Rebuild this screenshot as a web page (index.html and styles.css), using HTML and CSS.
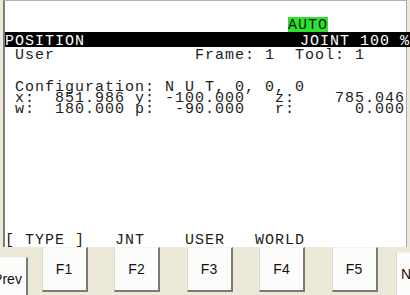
FILE: index.html
```html
<!DOCTYPE html>
<html lang="en">
<head>
    <meta charset="UTF-8">
    <title>Position</title>
    <link rel="stylesheet" href="styles.css">
</head>
<body>

<div id="pendant">
    <div id="screen">
        <div class="status"><span class="mode">AUTO</span></div>
        <div class="titlebar">
            <span>POSITION</span>
            <span>JOINT 100 %</span>
        </div>
        <pre class="line user"> User              Frame: 1  Tool: 1</pre>
        <pre class="line config"> Configuration: N U T, 0, 0, 0</pre>
        <pre class="line"> x:  851.986 y: -100.000   z:    785.046</pre>
        <pre class="line"> w:  180.000 p:  -90.000   r:      0.000</pre>
        <pre class="line labels">[ TYPE ]   JNT    USER   WORLD</pre>
    </div>

    <div id="keys">
        <button class="key prev">Prev</button>
        <button class="key">F1</button>
        <button class="key">F2</button>
        <button class="key">F3</button>
        <button class="key">F4</button>
        <button class="key">F5</button>
        <button class="key next">Next</button>
    </div>
</div>

</body>
</html>
```

FILE: styles.css
```css
body {
    margin: 0;
    background-color: #ece9d8; /* panel beige */
    overflow: hidden;
}

#pendant {
    width: 410px;
    height: 295px;
    overflow: hidden;
    padding-left: 3px;
    box-sizing: border-box;
}

#screen {
    display: flex;
    flex-direction: column;
    width: 401px;
    height: 246px;
    background-color: #fff;
    border-top: 1px solid #b4b4b0;
    border-left: 2px solid #7c7c78;
    border-right: 1px solid #a8a8a4;
    font-family: 'Liberation Mono', monospace;
    font-size: 15px;
    letter-spacing: 1px;
    color: #1c1c1c;
}

.status {
    display: flex;
    align-items: flex-end;
    height: 31px;
    padding-left: 283px;
}

.mode {
    height: 15px;
    line-height: 15px;
    padding-top: 1px;
    width: 40px;
    box-sizing: border-box;
    background-color: #2fe02f;
    color: #102010;
}

.titlebar {
    display: flex;
    justify-content: space-between;
    height: 15px;
    line-height: 15px;
    padding-top: 2px;
    box-sizing: border-box;
    margin-right: -4px;
    background-color: #000;
    color: #fff;
    white-space: pre;
}

.line {
    margin: 0;
    font: inherit;
    height: 11px;
    line-height: 11px;
}

.user {
    margin-top: 3px;
}

.config {
    margin-top: 21px;
}

.labels {
    margin-top: auto;
    margin-bottom: 1px;
}

#keys {
    display: flex;
    align-items: flex-start;
    gap: 26.5px;
}

.key {
    width: 46px;
    height: 45px;
    padding: 0;
    flex-shrink: 0;
    font-family: 'Liberation Sans', Arial, sans-serif;
    font-size: 14px;
    color: #111;
    background-color: #fcfcfa;
    border-style: solid;
    border-width: 1px 2px 2px 1px;
    border-color: #f4f4f0 #7a7a76 #7a7a76 #d8d8d4;
    box-sizing: border-box;
}

.prev {
    width: 40px;
    margin-left: -15px;
    margin-top: 10px;
    margin-right: -13px;
}

.next {
    width: 40px;
    margin-top: 5px;
    margin-left: -8px;
}
```
